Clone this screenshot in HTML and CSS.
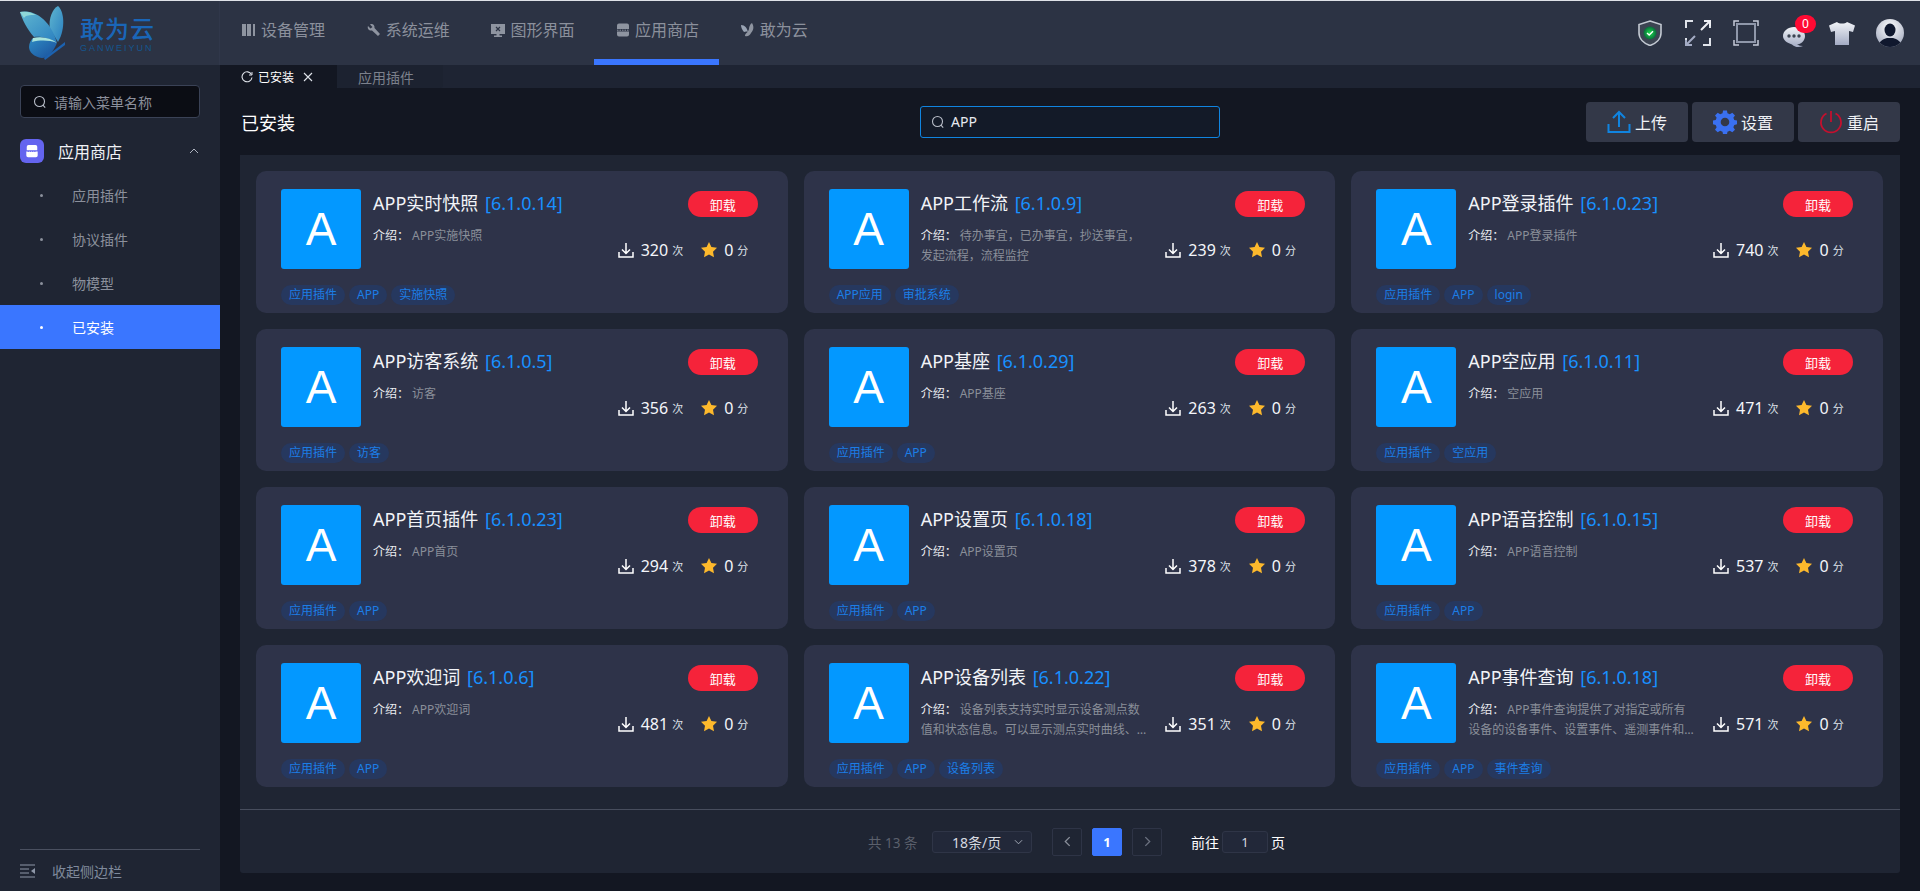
FILE: index.html
```html
<!DOCTYPE html>
<html lang="zh-CN">
<head>
<meta charset="utf-8">
<title>应用商店</title>
<link rel="stylesheet" href="styles.css">
</head>
<body>
<svg class="defs" aria-hidden="true">
  <defs>
    <linearGradient id="wingA" x1="0" y1="0" x2="1" y2="1"><stop offset="0" stop-color="#5fb6d0"/><stop offset="1" stop-color="#2a7fc0"/></linearGradient>
    <linearGradient id="wingB" x1="0" y1="0" x2="1" y2="1"><stop offset="0" stop-color="#2f8cc4"/><stop offset="1" stop-color="#1a4f9c"/></linearGradient>
    <linearGradient id="silver" x1="0" y1="0" x2="0" y2="1"><stop offset="0" stop-color="#f1f3f7"/><stop offset="1" stop-color="#a3abc4"/></linearGradient>
    <radialGradient id="green"><stop offset="0" stop-color="#19e04a"/><stop offset="1" stop-color="#0a6a3c"/></radialGradient>
    <radialGradient id="face" cx=".5" cy=".3" r=".8"><stop offset="0" stop-color="#ffffff"/><stop offset="1" stop-color="#9aa2b8"/></radialGradient>
  </defs>
  <symbol id="i-down" viewBox="0 0 16 16"><path d="M8 1v10M4 7.500 8 11.500l4-4M1 10v5h14v-5" fill="none" stroke="#fff" stroke-width="1.500"/></symbol>
  <symbol id="i-star" viewBox="0 0 16 16"><path d="M8 0l2.400 5 5.600.8-4 3.900 1 5.500L8 12.600l-5 2.600 1-5.500-4-3.900L5.600 5z" fill="#fdb92c"/></symbol>
  <symbol id="i-search" viewBox="0 0 14 14"><circle cx="6.500" cy="6.500" r="5" fill="none" stroke="currentColor" stroke-width="1.100"/><path d="M10 10.200l2.200 2.400" stroke="currentColor" stroke-width="1.100"/></symbol>
  <symbol id="i-store" viewBox="0 0 16 16"><path d="M4 1h8a2 2 0 0 1 2 2v4H2V3a2 2 0 0 1 2-2zM1.500 8.500h13V13a2 2 0 0 1-2 2h-9a2 2 0 0 1-2-2z" fill="currentColor"/><path d="M3 8.500h10" stroke="#6464ef" stroke-width="1" stroke-dasharray="1.500 1"/></symbol>
</svg>

<div class="app">
  <header class="topbar">
    <div class="brand">
      <svg class="brand-mark" viewBox="0 0 46 56" width="46" height="56">
        <path d="M30 24C28 14 33 3 38 1c6 5 8 22 0 36z" fill="url(#wingA)"/>
        <path d="M0 7C13 4 31 14 37 38 28 32 18 31 14 32 7 24 2 14 0 7z" fill="url(#wingA)"/>
        <path d="M0 7c6-1 11 0 16 3C9 10 6 10 4 13z" fill="#8fd8d8"/>
        <path d="M13 33c9-2 18 0 24 5-4 9-9 15-15 15-8-1-13-6-13-11 0-4 2-7 4-9z" fill="url(#wingB)"/>
        <path d="M13 33c9-2 18 0 24 5-8-3-17-3-25-1z" fill="#a9e4dc"/>
        <path d="M25 55l20-15v-3L24 53z" fill="#1c62b0"/>
      </svg>
      <div class="brand-text">
        <span class="brand-cn">敢为云</span>
        <span class="brand-en">GANWEIYUN</span>
      </div>
    </div>
    <nav class="nav">
      <a class="nav-item"><svg class="nav-icon" viewBox="0 0 16 16"><path d="M1 2h4v12H1zM6 2h4v12H6zM12 2h2v12h-2z" fill="currentColor"/></svg>设备管理</a>
      <a class="nav-item"><svg class="nav-icon" viewBox="0 0 16 16"><path d="M2 4l2.500 2.500L6.500 5 4 2.500C6.500 1 9 3 8.500 6L14 12l-2 2-6-5.500C3 9 1 6.500 2 4z" fill="currentColor"/></svg>系统运维</a>
      <a class="nav-item"><svg class="nav-icon" viewBox="0 0 16 16"><path d="M1 2h14v10H9.500v1.500H12V15H4v-1.500h2.500V12H1z" fill="currentColor"/><path d="M6 5l4 4M10 5L6 9" stroke="#2c3344" stroke-width="1.200"/></svg>图形界面</a>
      <a class="nav-item nav-active"><svg class="nav-icon" viewBox="0 0 16 16"><path d="M4 1.500h8a2 2 0 0 1 2 2V7H2V3.500a2 2 0 0 1 2-2zM2 9.500h12v3a2 2 0 0 1-2 2H4a2 2 0 0 1-2-2z" fill="currentColor"/><path d="M2 8.200h12" stroke="currentColor" stroke-width="1" stroke-dasharray="1.500 1"/></svg>应用商店</a>
      <a class="nav-item"><svg class="nav-icon" viewBox="0 0 16 16"><path d="M1 3c4 0 6 3 7 7-2-1-3 0-4 0C2 8 1 5 1 3z" fill="#9aa4b4"/><path d="M9 7c0-2 1-5 3-6 2 3 2 7-1 10-1 2-3 4-6 3 0-3 3-3 4-7z" fill="currentColor"/></svg>敢为云</a>
    </nav>
    <div class="tools">
      <span class="tool">
        <svg viewBox="0 0 24 26" width="24" height="26"><path d="M12 1l11 3.500V13c0 6-5 10.500-11 12.500C6 23.500 1 19 1 13V4.500z" fill="#3c4452" stroke="#c3c9d2" stroke-width="1.600"/><circle cx="12" cy="13" r="6.500" fill="url(#green)"/><path d="M9 13l2.200 2 3.800-3.800" fill="none" stroke="#fff" stroke-width="1.400"/></svg>
      </span>
      <span class="tool">
        <svg viewBox="0 0 26 26" width="26" height="26" fill="none" stroke-width="2"><path d="M1 8V1h7M18 25h7v-7" stroke="#dfe3ea"/><path d="M25 1l-9 9M19 1h6v6" stroke="#eef0f5"/><path d="M1 25l9-9M7 25H1v-6" stroke="#a3abc4"/><path d="M25 8V6M1 18v2" stroke="#dfe3ea"/></svg>
      </span>
      <span class="tool">
        <svg viewBox="0 0 26 26" width="26" height="26" fill="none"><path d="M1 6V1h5M20 1h5v5M25 20v5h-5M6 25H1v-5" stroke="#c5cad8" stroke-width="1.500"/><rect x="4" y="4" width="18" height="18" stroke="#8f97aa" stroke-width="2"/></svg>
      </span>
      <span class="tool tool-chat">
        <svg viewBox="0 0 24 22" width="24" height="22"><path d="M12 1c6 0 11 4 11 9s-4 8-8 8.500c2 1 4 1.500 6 1.500-4 2-9 1-11-1.500C5 17 1 14 1 10 1 5 6 1 12 1z" fill="url(#silver)"/><circle cx="7" cy="10" r="1.700" fill="#3c4452"/><circle cx="12" cy="10" r="1.700" fill="#3c4452"/><circle cx="17" cy="10" r="1.700" fill="#3c4452"/></svg>
        <span class="badge">0</span>
      </span>
      <span class="tool">
        <svg viewBox="0 0 28 24" width="28" height="24"><path d="M9 1c2 2 8 2 10 0l8 3.500-2 6.500-4-1V24H7V10l-4 1L1 4.500z" fill="url(#silver)"/></svg>
      </span>
      <span class="tool">
        <svg viewBox="0 0 28 28" width="28" height="28"><clipPath id="av"><circle cx="14" cy="14" r="14"/></clipPath><g clip-path="url(#av)"><rect width="28" height="28" fill="url(#face)"/><ellipse cx="14" cy="11" rx="5.500" ry="6.500" fill="#10182e"/><path d="M2 28c1-6 5-8 9-9h6c4 1 8 3 9 9z" fill="#10182e"/></g></svg>
      </span>
    </div>
  </header>

  <div class="body">
    <aside class="sidebar">
      <div class="side-search"><svg class="search-icon"><use href="#i-search"/></svg>请输入菜单名称</div>
      <div class="menu-parent">
        <span class="menu-badge"><svg class="menu-badge-icon"><use href="#i-store"/></svg></span>
        <span class="menu-parent-text">应用商店</span>
        <svg class="chev" viewBox="0 0 10 6" width="10" height="6"><path d="M1 5l4-4 4 4" fill="none" stroke="#aeb4c0" stroke-width="1"/></svg>
      </div>
      <a class="menu-item"><i class="dot"></i>应用插件</a>
      <a class="menu-item"><i class="dot"></i>协议插件</a>
      <a class="menu-item"><i class="dot"></i>物模型</a>
      <a class="menu-item menu-active"><i class="dot"></i>已安装</a>
      <div class="collapse">
        <svg viewBox="0 0 15 14" width="15" height="14"><path d="M0 1h15M0 5h9M0 9h9M0 13h15" stroke="#8e97a8" stroke-width="1"/><path d="M15 4v6l-4-3z" fill="#8e97a8"/></svg>
        收起侧边栏
      </div>
    </aside>

    <main class="main">
      <div class="tabs">
        <div class="tab tab-active">
          <svg viewBox="0 0 12 12" width="12" height="12"><path d="M10.500 3.500A5 5 0 1 0 11 6.500" fill="none" stroke="#dfe3ea" stroke-width="1.100"/><path d="M11 1v3H8" fill="none" stroke="#dfe3ea" stroke-width="1"/></svg>
          <span>已安装</span>
          <svg class="tab-x" viewBox="0 0 10 10" width="10" height="10"><path d="M1 1l8 8M9 1L1 9" stroke="#dfe3ea" stroke-width="1.100"/></svg>
        </div>
        <div class="tab tab-idle">应用插件</div>
      </div>

      <div class="head">
        <div class="head-title">已安装</div>
        <div class="head-search"><svg class="search-icon"><use href="#i-search"/></svg>APP</div>
        <div class="head-actions">
          <button class="act"><svg viewBox="0 0 24 24" width="24" height="24" fill="none" stroke="#1084e0" stroke-width="2"><path d="M12 17V2M6 8l6-6 6 6M1.500 14v8h21v-8"/></svg>上传</button>
          <button class="act"><svg viewBox="0 0 24 24" width="24" height="24"><path fill="#3a70f0" fill-rule="evenodd" d="M10 1h4l.6 3 2.400 1 2.600-1.700 2.800 2.800L20.700 8.700l1 2.300 3 .6v3.800l-3 .6-1 2.400 1.700 2.600-2.800 2.800-2.600-1.700-2.400 1-.6 3h-4l-.6-3-2.400-1-2.600 1.700-2.800-2.800 1.700-2.600-1-2.400-3-.6v-3.800l3-.6 1-2.300L1.600 6.100l2.800-2.800L7 5l2.400-1zM12 8.500a4.500 4.500 0 1 0 0 9 4.500 4.500 0 0 0 0-9z" transform="scale(.96) translate(.5 -.5)"/></svg>设置</button>
          <button class="act"><svg viewBox="0 0 24 24" width="24" height="24" fill="none" stroke="#c4102e" stroke-width="1.800"><path d="M7.500 3.500a10 10 0 1 0 9 0M12 1v11"/></svg>重启</button>
        </div>
      </div>

      <section class="panel">
        <div class="grid">
          <article class="card"><div class="card-top"><div class="logo">A</div><div class="info"><h3 class="title">APP实时快照 <em>[6.1.0.14]</em></h3><p class="desc"><b>介绍：</b>APP实施快照</p></div><div class="side"><button class="remove">卸载</button><div class="stats"><svg class="si"><use href="#i-down"/></svg><span class="num">320</span><small>次</small><svg class="si star"><use href="#i-star"/></svg><span class="num">0</span><small>分</small></div></div></div><div class="tags"><span>应用插件</span><span>APP</span><span>实施快照</span></div></article>
          <article class="card"><div class="card-top"><div class="logo">A</div><div class="info"><h3 class="title">APP工作流 <em>[6.1.0.9]</em></h3><p class="desc"><b>介绍：</b>待办事宜，已办事宜，抄送事宜，发起流程，流程监控</p></div><div class="side"><button class="remove">卸载</button><div class="stats"><svg class="si"><use href="#i-down"/></svg><span class="num">239</span><small>次</small><svg class="si star"><use href="#i-star"/></svg><span class="num">0</span><small>分</small></div></div></div><div class="tags"><span>APP应用</span><span>审批系统</span></div></article>
          <article class="card"><div class="card-top"><div class="logo">A</div><div class="info"><h3 class="title">APP登录插件 <em>[6.1.0.23]</em></h3><p class="desc"><b>介绍：</b>APP登录插件</p></div><div class="side"><button class="remove">卸载</button><div class="stats"><svg class="si"><use href="#i-down"/></svg><span class="num">740</span><small>次</small><svg class="si star"><use href="#i-star"/></svg><span class="num">0</span><small>分</small></div></div></div><div class="tags"><span>应用插件</span><span>APP</span><span>login</span></div></article>
          <article class="card"><div class="card-top"><div class="logo">A</div><div class="info"><h3 class="title">APP访客系统 <em>[6.1.0.5]</em></h3><p class="desc"><b>介绍：</b>访客</p></div><div class="side"><button class="remove">卸载</button><div class="stats"><svg class="si"><use href="#i-down"/></svg><span class="num">356</span><small>次</small><svg class="si star"><use href="#i-star"/></svg><span class="num">0</span><small>分</small></div></div></div><div class="tags"><span>应用插件</span><span>访客</span></div></article>
          <article class="card"><div class="card-top"><div class="logo">A</div><div class="info"><h3 class="title">APP基座 <em>[6.1.0.29]</em></h3><p class="desc"><b>介绍：</b>APP基座</p></div><div class="side"><button class="remove">卸载</button><div class="stats"><svg class="si"><use href="#i-down"/></svg><span class="num">263</span><small>次</small><svg class="si star"><use href="#i-star"/></svg><span class="num">0</span><small>分</small></div></div></div><div class="tags"><span>应用插件</span><span>APP</span></div></article>
          <article class="card"><div class="card-top"><div class="logo">A</div><div class="info"><h3 class="title">APP空应用 <em>[6.1.0.11]</em></h3><p class="desc"><b>介绍：</b>空应用</p></div><div class="side"><button class="remove">卸载</button><div class="stats"><svg class="si"><use href="#i-down"/></svg><span class="num">471</span><small>次</small><svg class="si star"><use href="#i-star"/></svg><span class="num">0</span><small>分</small></div></div></div><div class="tags"><span>应用插件</span><span>空应用</span></div></article>
          <article class="card"><div class="card-top"><div class="logo">A</div><div class="info"><h3 class="title">APP首页插件 <em>[6.1.0.23]</em></h3><p class="desc"><b>介绍：</b>APP首页</p></div><div class="side"><button class="remove">卸载</button><div class="stats"><svg class="si"><use href="#i-down"/></svg><span class="num">294</span><small>次</small><svg class="si star"><use href="#i-star"/></svg><span class="num">0</span><small>分</small></div></div></div><div class="tags"><span>应用插件</span><span>APP</span></div></article>
          <article class="card"><div class="card-top"><div class="logo">A</div><div class="info"><h3 class="title">APP设置页 <em>[6.1.0.18]</em></h3><p class="desc"><b>介绍：</b>APP设置页</p></div><div class="side"><button class="remove">卸载</button><div class="stats"><svg class="si"><use href="#i-down"/></svg><span class="num">378</span><small>次</small><svg class="si star"><use href="#i-star"/></svg><span class="num">0</span><small>分</small></div></div></div><div class="tags"><span>应用插件</span><span>APP</span></div></article>
          <article class="card"><div class="card-top"><div class="logo">A</div><div class="info"><h3 class="title">APP语音控制 <em>[6.1.0.15]</em></h3><p class="desc"><b>介绍：</b>APP语音控制</p></div><div class="side"><button class="remove">卸载</button><div class="stats"><svg class="si"><use href="#i-down"/></svg><span class="num">537</span><small>次</small><svg class="si star"><use href="#i-star"/></svg><span class="num">0</span><small>分</small></div></div></div><div class="tags"><span>应用插件</span><span>APP</span></div></article>
          <article class="card"><div class="card-top"><div class="logo">A</div><div class="info"><h3 class="title">APP欢迎词 <em>[6.1.0.6]</em></h3><p class="desc"><b>介绍：</b>APP欢迎词</p></div><div class="side"><button class="remove">卸载</button><div class="stats"><svg class="si"><use href="#i-down"/></svg><span class="num">481</span><small>次</small><svg class="si star"><use href="#i-star"/></svg><span class="num">0</span><small>分</small></div></div></div><div class="tags"><span>应用插件</span><span>APP</span></div></article>
          <article class="card"><div class="card-top"><div class="logo">A</div><div class="info"><h3 class="title">APP设备列表 <em>[6.1.0.22]</em></h3><p class="desc"><b>介绍：</b>设备列表支持实时显示设备测点数值和状态信息。可以显示测点实时曲线、历史曲线和报警信息等内容</p></div><div class="side"><button class="remove">卸载</button><div class="stats"><svg class="si"><use href="#i-down"/></svg><span class="num">351</span><small>次</small><svg class="si star"><use href="#i-star"/></svg><span class="num">0</span><small>分</small></div></div></div><div class="tags"><span>应用插件</span><span>APP</span><span>设备列表</span></div></article>
          <article class="card"><div class="card-top"><div class="logo">A</div><div class="info"><h3 class="title">APP事件查询 <em>[6.1.0.18]</em></h3><p class="desc"><b>介绍：</b>APP事件查询提供了对指定或所有设备的设备事件、设置事件、遥测事件和系统事件的查询功能</p></div><div class="side"><button class="remove">卸载</button><div class="stats"><svg class="si"><use href="#i-down"/></svg><span class="num">571</span><small>次</small><svg class="si star"><use href="#i-star"/></svg><span class="num">0</span><small>分</small></div></div></div><div class="tags"><span>应用插件</span><span>APP</span><span>事件查询</span></div></article>
        </div>
        <footer class="pager">
          <span class="pg-total">共 13 条</span>
          <span class="pg-size">18条/页<svg viewBox="0 0 10 6" width="9" height="6"><path d="M1 1l4 4 4-4" fill="none" stroke="#aeb4c0" stroke-width="1"/></svg></span>
          <span class="pg-btn"><svg viewBox="0 0 8 12" width="7" height="11"><path d="M6.500 1L1.500 6l5 5" fill="none" stroke="#8a8f9a" stroke-width="1.500"/></svg></span>
          <span class="pg-btn pg-on">1</span>
          <span class="pg-btn"><svg viewBox="0 0 8 12" width="7" height="11"><path d="M1.500 1l5 5-5 5" fill="none" stroke="#6c7280" stroke-width="1.500"/></svg></span>
          <span class="pg-goto">前往<span class="pg-input">1</span>页</span>
        </footer>
      </section>
    </main>
  </div>
</div>
</body>
</html>
```
FILE: styles.css
```css
* { box-sizing: border-box; }
html, body { margin: 0; height: 100%; overflow: hidden; }
body {
  font-family: "Noto Sans", "Noto Sans CJK SC", sans-serif;
  background: #131722;
  color: #fff;
}
.defs { position: absolute; width: 0; height: 0; }
.app { display: flex; flex-direction: column; height: 100vh; }

/* top bar */
.topbar {
  display: flex;
  height: 65px;
  flex: none;
  background: #2c3344;
  border-top: 1px solid #dfe2e8;
}
.brand {
  width: 220px;
  flex: none;
  display: flex;
  align-items: center;
  padding-left: 20px;
  gap: 14px;
  border-right: 1px solid #30374a;
}
.brand-mark { flex: none; margin-top: -1px; }
.brand-text { display: flex; flex-direction: column; margin-top: 2px; }
.brand-cn { font-size: 24px; line-height: 28px; font-weight: 500; color: #1a66b8; letter-spacing: 1px; }
.brand-en { font-family: "Liberation Sans", sans-serif; font-size: 9px; line-height: 10px; color: #15568f; letter-spacing: 2px; }
.nav { display: flex; }
.nav-item {
  width: 124.700px;
  padding-left: 21px;
  display: flex;
  align-items: center;
  gap: 4px;
  font-size: 16px;
  line-height: 1;
  color: #8b909c;
  padding-bottom: 12px;
  padding-top: 6px;
}
.nav-icon { width: 16px; height: 16px; flex: none; color: #8e94a0; }
.nav-active { border-bottom: 6px solid #3a76ff; padding-bottom: 6px; }
.tools { margin-left: auto; display: flex; gap: 20px; align-items: center; padding-right: 16px; padding-bottom: 1px; }
.tool { width: 28px; height: 28px; display: flex; align-items: center; justify-content: center; position: relative; }
.tool-chat { padding-top: 8px; }
.badge {
  position: absolute;
  top: -4px;
  left: 15px;
  width: 21px;
  height: 18px;
  border-radius: 9px;
  background: #ff0a33;
  color: #fff;
  font-size: 12px;
  line-height: 18px;
  text-align: center;
}

/* layout */
.body { flex: 1; display: flex; min-height: 0; }
.sidebar {
  width: 220px;
  flex: none;
  background: #1f2533;
  display: flex;
  flex-direction: column;
}
.side-search {
  margin: 20px 20px 11px;
  height: 33px;
  flex: none;
  background: #0b0d14;
  border: 1px solid #3a4256;
  border-radius: 4px;
  display: flex;
  align-items: center;
  padding-left: 12px;
  gap: 7px;
  font-size: 14px;
  color: #8b909c;
}
.search-icon { width: 14px; height: 14px; flex: none; color: #b8bdc8; }
.menu-parent {
  height: 44px;
  flex: none;
  display: flex;
  align-items: center;
  padding: 0 20px;
  font-size: 16px;
  color: #f0f2f6;
}
.menu-badge {
  width: 24px;
  height: 24px;
  border-radius: 6px;
  background: #6464ef;
  display: flex;
  align-items: center;
  justify-content: center;
  margin-right: 14px;
}
.menu-badge-icon { width: 14px; height: 14px; color: #fff; }
.chev { margin-left: auto; margin-right: 1px; }
.menu-item {
  height: 44px;
  flex: none;
  display: flex;
  align-items: center;
  padding-left: 40px;
  font-size: 14px;
  color: #8b909c;
}
.dot { width: 3px; height: 3px; border-radius: 50%; background: #8b909c; margin-right: 29px; }
.menu-active { background: #3a76ff; color: #fff; }
.menu-active .dot { background: #fff; }
.collapse {
  margin: auto 20px 0;
  height: 42px;
  flex: none;
  border-top: 1px solid #4a5060;
  display: flex;
  align-items: center;
  gap: 17px;
  font-size: 14px;
  color: #7f8a9c;
}

.main { flex: 1; min-width: 0; display: flex; flex-direction: column; padding-bottom: 18px; }
.tabs { height: 23px; flex: none; display: flex; background: #1e2433; }
.tab { display: flex; align-items: center; }
.tab-active {
  width: 117px;
  padding-left: 21px;
  background: #131722;
  font-size: 12px;
  color: #fff;
  gap: 5px;
}
.tab-x { margin-left: 4px; }
.tab-idle { width: 106px; padding-left: 21px; background: #1c2230; font-size: 14px; color: #7c818c; border-radius: 0 0 3px 3px; }
.head { height: 67px; flex: none; display: flex; align-items: center; padding: 0 20px 0 21px; }
.head-title { width: 679px; flex: none; font-size: 18px; color: #fff; }
.head-search {
  width: 300px;
  height: 32px;
  flex: none;
  border: 1px solid #1084e0;
  border-radius: 3px;
  background: #131a28;
  display: flex;
  align-items: center;
  padding-left: 10px;
  gap: 6px;
  font-size: 14px;
  color: #e8eaf0;
}
.head-actions { margin-left: auto; display: flex; gap: 4px; }
.act {
  width: 102px;
  height: 40px;
  border: 0;
  border-radius: 4px;
  background: #333848;
  color: #f0f2f6;
  font-family: inherit;
  font-size: 16px;
  display: flex;
  align-items: center;
  justify-content: center;
  gap: 4px;
  padding: 0;
}
.panel {
  flex: 1;
  min-height: 0;
  margin: 0 20px;
  background: #1f2533;
  border-radius: 0 0 3px 3px;
  display: flex;
  flex-direction: column;
}
.grid {
  display: grid;
  grid-template-columns: repeat(3, 1fr);
  gap: 16px;
  padding: 16px 17px 22px 16px;
}
.card {
  height: 142px;
  padding: 18px 30px 0 25px;
  background: #2e3349;
  border-radius: 10px;
}
.card-top { display: flex; height: 80px; }
.logo {
  width: 80px;
  height: 80px;
  flex: none;
  border-radius: 3px;
  background: #0398ff;
  font-family: "Liberation Sans", sans-serif;
  font-size: 46px;
  line-height: 80px;
  text-align: center;
  color: #fff;
}
.info { flex: 1; min-width: 0; margin-left: 12px; }
.title { margin: 0 0 9px; font-size: 18px; line-height: 28px; font-weight: 400; color: #f2f4f8; white-space: nowrap; }
.title em { font-style: normal; color: #1890ff; margin-left: 2px; }
.desc {
  margin: 0;
  width: 228px;
  font-size: 12px;
  line-height: 20px;
  color: #8a8f99;
  display: -webkit-box;
  -webkit-box-orient: vertical;
  -webkit-line-clamp: 2;
  overflow: hidden;
}
.desc b { font-weight: 400; color: #eceef2; margin-right: 3px; }
.side { width: 140px; flex: none; display: flex; flex-direction: column; align-items: flex-end; }
.remove {
  width: 70px;
  height: 26px;
  margin-top: 2px;
  border: 0;
  border-radius: 13px;
  background: #f5233a;
  color: #fff;
  font-family: inherit;
  font-size: 13px;
  padding: 0;
}
.stats {
  align-self: flex-start;
  margin-top: 21px;
  height: 24px;
  display: flex;
  align-items: center;
  white-space: nowrap;
}
.si { width: 16px; height: 16px; flex: none; }
.star { margin-left: 18px; }
.num { font-size: 16px; margin-left: 7px; color: #f4f6fa; }
.stats small { font-size: 11px; margin-left: 4px; color: #dfe3ea; }
.tags { display: flex; gap: 4px; margin-top: 16px; }
.tags span {
  height: 20px;
  padding: 0 8px;
  border-radius: 10px;
  background: #26385f;
  color: #1c7ee6;
  font-size: 12px;
  line-height: 20px;
}
.pager {
  flex: 1;
  border-top: 1px solid #474d5d;
  display: flex;
  align-items: center;
  padding-left: 628px;
  font-size: 14px;
  color: #fff;
}
.pg-total { width: 64px; flex: none; font-size: 13.500px; color: #5b606c; }
.pg-size {
  width: 100px;
  height: 22px;
  flex: none;
  margin-right: 20px;
  background: #222839;
  border: 1px solid #2f3547;
  border-radius: 3px;
  display: flex;
  align-items: center;
  justify-content: space-between;
  padding: 0 8px 0 19px;
  font-size: 14px;
  color: #d6d9e0;
}
.pg-btn {
  width: 30px;
  height: 28px;
  flex: none;
  margin-right: 10px;
  border: 1px solid #2e3446;
  border-radius: 2px;
  display: flex;
  align-items: center;
  justify-content: center;
}
.pg-on { background: #3a76ff; border-color: #3a76ff; font-weight: 700; font-size: 13px; }
.pg-goto { display: flex; align-items: center; gap: 3px; margin-left: 19px; font-size: 14px; }
.pg-input {
  width: 46px;
  height: 22px;
  background: #222839;
  border: 1px solid #2f3547;
  border-radius: 3px;
  text-align: center;
  line-height: 20px;
  font-size: 13px;
  color: #d6d9e0;
}
```
